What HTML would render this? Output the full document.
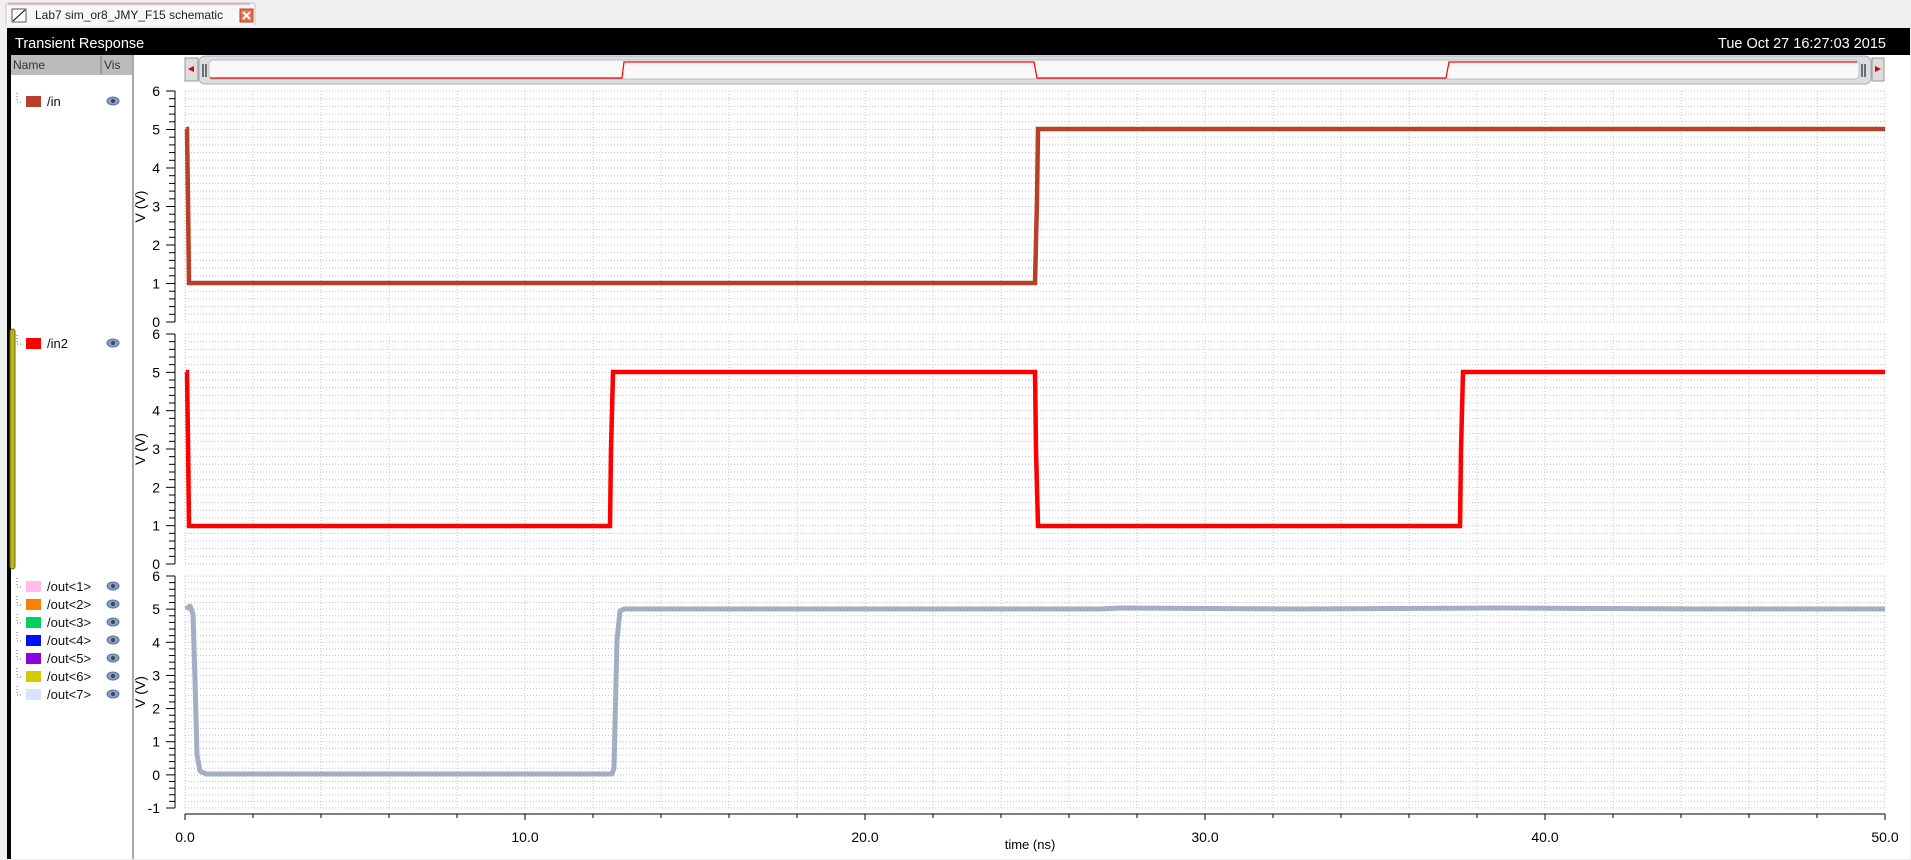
<!DOCTYPE html>
<html><head><meta charset="utf-8"><style>
body{margin:0;width:1911px;height:860px;overflow:hidden;background:#efefef;font-family:"Liberation Sans",sans-serif}
svg{position:absolute;left:0;top:0}
</style></head><body>
<svg id="s" width="1911" height="860" xmlns="http://www.w3.org/2000/svg" font-family="Liberation Sans, sans-serif">
<rect x="0" y="0" width="1911" height="860" fill="#efefef"/>
<path d="M6 25 V6 Q6 3 9 3 H252 Q255 3 255 6 V25" fill="#f7f7f7" stroke="#c8c8c8"/>
<line x1="8" y1="4" x2="250" y2="4" stroke="#e88" />
<rect x="12" y="9" width="14" height="13" fill="#fff" stroke="#555"/>
<line x1="13" y1="21" x2="25" y2="10" stroke="#000"/>
<text x="35" y="19" font-size="12" fill="#222">Lab7 sim_or8_JMY_F15 schematic</text>
<rect x="240" y="9" width="13" height="13" fill="#e8704a" stroke="#c04020"/>
<path d="M243 12 L250 19 M250 12 L243 19" stroke="#fff" stroke-width="2"/>
<rect x="7" y="28" width="1903" height="831" fill="#fff"/>
<rect x="7" y="28" width="1903" height="27" fill="#000"/>
<text x="15" y="48" font-size="14.5" fill="#fff">Transient Response</text>
<text x="1886" y="48" font-size="14.5" fill="#fff" text-anchor="end">Tue Oct 27 16:27:03 2015</text>
<rect x="7" y="55" width="4" height="804" fill="#000"/>
<rect x="11" y="55" width="122" height="20" fill="#bbb"/>
<text x="13" y="69" font-size="12" fill="#333">Name</text>
<line x1="101" y1="56" x2="101" y2="74" stroke="#777"/>
<text x="104" y="69" font-size="12" fill="#333">Vis</text>
<line x1="133" y1="55" x2="133" y2="859" stroke="#aaa" stroke-width="2"/>
<rect x="10" y="329" width="5" height="240" rx="2.5" fill="#b5b520" stroke="#6a6a10"/>
<g id="legend"></g>
<rect x="185" y="58" width="13" height="23" fill="#ddd" stroke="#999"/>
<path d="M188 69 L194 66 V72Z" fill="#d00"/>
<rect x="199" y="56" width="1672" height="28" rx="6" fill="#dadde2" stroke="#a8adb5"/>
<rect x="209" y="60" width="1650" height="19" rx="4" fill="#f8f8f8" stroke="#bbb"/>
<line x1="203" y1="64" x2="203" y2="77" stroke="#000"/><line x1="206" y1="64" x2="206" y2="77" stroke="#000"/>
<line x1="1862" y1="64" x2="1862" y2="77" stroke="#000"/><line x1="1865" y1="64" x2="1865" y2="77" stroke="#000"/>
<rect x="1872" y="58" width="12" height="23" fill="#ddd" stroke="#999"/>
<path d="M1875 66 V72 L1881 69Z" fill="#d00"/>
<polyline points="210,78 622,78 624,62 1034,62 1037,78 1446,78 1449,62 1857,62" fill="none" stroke="#f00" stroke-width="1.2"/>
<g id="grid"></g>
<polyline points="186,129 187,129 188,200 189,283 1035,283 1037,200 1038,129 1885,129" fill="none" stroke="#b8402a" stroke-width="4.5"/>
<polyline points="186,372 187,372 188,440 189,526 610,526 611,450 613,372 1035,372 1036,450 1038,526 1460,526 1461,450 1463,372 1885,372" fill="none" stroke="#f00" stroke-width="4.5"/>
<polyline points="186,609 190,606 193,614 195,680 197,755 200,771 206,774 612,774 614,768 617,640 620,611 624,609 1100,609 1120,608 1300,609 1500,608 1700,609 1885,609" fill="none" stroke="#a3adc4" stroke-width="5" stroke-linejoin="round"/>
<text x="1030" y="849" font-size="13" text-anchor="middle" fill="#000">time (ns)</text>
</svg>
<script>
const ns="http://www.w3.org/2000/svg",g=document.getElementById('grid');
function el(t,a,p){const e=document.createElementNS(ns,t);for(const k in a)e.setAttribute(k,a[k]);(p||g).appendChild(e);return e;}
const plots=[{top:91,bot:322,min:0,max:6},{top:334,bot:564,min:0,max:6},{top:576,bot:808,min:-1,max:6}];
plots.forEach(p=>{
 const r=p.max-p.min,ppv=(p.bot-p.top)/r;
 for(let i=0;i<=r*5;i++){const y=p.bot-i*ppv/5;
  el('line',{x1:185,x2:1885,y1:y,y2:y,stroke:'#c4c4c4','stroke-dasharray':'1,2'});
  el('line',{x1:i%5?169:166,x2:175,y1:y,y2:y,stroke:'#000'});}
 for(let v=p.min;v<=p.max;v++){const y=p.bot-(v-p.min)*ppv;
  const t=el('text',{x:160,y:y+5,'font-size':14,'text-anchor':'end'});t.textContent=v;}
 for(let i=0;i<=25;i++){const x=185+i*68;el('line',{x1:x,x2:x,y1:p.top,y2:p.bot,stroke:'#c4c4c4','stroke-dasharray':'1,2'});}
 el('line',{x1:175,x2:175,y1:p.top,y2:p.bot,stroke:'#000'});
 const yl=(p.top+p.bot)/2;const t=el('text',{x:0,y:0,'font-size':14,transform:`translate(145 ${yl}) rotate(-90)`,'text-anchor':'middle'});t.textContent='V (V)';
});
el('line',{x1:185,x2:1885,y1:814,y2:814,stroke:'#000'});
for(let i=0;i<=25;i++){const x=185+i*68;el('line',{x1:x,x2:x,y1:814,y2:i%5?818:820,stroke:'#000'});}
for(let i=0;i<=5;i++){const t=el('text',{x:185+i*340,y:842,'font-size':14,'text-anchor':'middle'});t.textContent=(i*10).toFixed(1);}
const L=document.getElementById('legend');
const items=[[100,'#b8402a','/in'],[342,'#f00','/in2'],[585,'#ffbde8','/out<1>'],[603,'#ff8000','/out<2>'],[621,'#00d060','/out<3>'],[639,'#0010ff','/out<4>'],[657,'#9000e0','/out<5>'],[675,'#d8c800','/out<6>'],[693,'#d8e4ff','/out<7>']];
items.forEach(([y,c,n])=>{
 el('path',{d:`M17 ${y-7} V${y+2} H23`,stroke:'#666','stroke-dasharray':'1,2',fill:'none'},L);
 el('rect',{x:26,y:y-4,width:15,height:11,fill:c},L);
 const t=el('text',{x:47,y:y+6,'font-size':13,fill:'#111'},L);t.textContent=n;
 el('ellipse',{cx:113,cy:y+1,rx:6,ry:4,fill:'#8a9ec0',stroke:'#5a6e90'},L);
 el('circle',{cx:113,cy:y+1,r:2,fill:'#34486a'},L);
});
</script>
</body></html>
